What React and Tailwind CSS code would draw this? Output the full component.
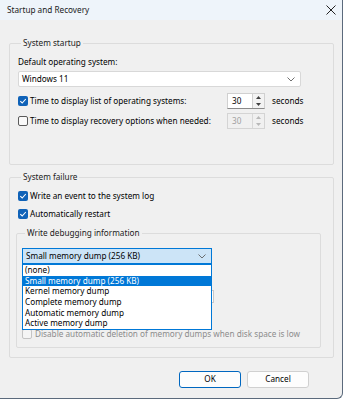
import { useState } from 'react';

const font = { fontFamily: '"Noto Sans", "Open Sans", sans-serif' };

function Check({ checked, disabled }) {
  if (checked) {
    return (
      <span className="w-[10px] h-[10px] rounded-[2px] bg-[#0f62b8] flex items-center justify-center shrink-0">
        <svg width="8" height="8" viewBox="0 0 8 8">
          <path d="M1.3 4.2 L3.2 6 L6.8 2" fill="none" stroke="white" strokeWidth="1.1" />
        </svg>
      </span>
    );
  }
  return (
    <span
      className={`w-[10px] h-[10px] rounded-[2px] border shrink-0 ${
        disabled ? 'border-[#c4c4c4] bg-[#f5f5f5]' : 'border-[#5a5a5a] bg-[#f9f9f9]'
      }`}
    />
  );
}

function Chevron() {
  return (
    <svg width="8" height="5" viewBox="0 0 8 5">
      <path d="M0.5 0.5 L4 4 L7.5 0.5" fill="none" stroke="#606060" strokeWidth="0.9" />
    </svg>
  );
}

function Spin({ value, disabled }) {
  return (
    <div
      className={`flex w-[38px] h-[16px] border ${
        disabled ? 'border-[#d4d4d4] bg-[#f0f0f0] text-[#a0a0a0]' : 'border-[#d0d0d0] border-b-[#8a8a8a] bg-white'
      }`}
    >
      <span className="flex-1 pl-[4px] leading-[14px]">{value}</span>
      <div className={`w-[12px] flex flex-col border-l ${disabled ? 'border-[#d8d8d8]' : 'border-[#d0d0d0] bg-[#f3f3f3]'}`}>
        <div className="flex-1 flex items-center justify-center">
          <svg width="5" height="3" viewBox="0 0 5 3">
            <path d="M0 3 L2.5 0 L5 3 Z" fill={disabled ? '#b8b8b8' : '#404040'} />
          </svg>
        </div>
        <div className="flex-1 flex items-center justify-center">
          <svg width="5" height="3" viewBox="0 0 5 3">
            <path d="M0 0 L2.5 3 L5 0 Z" fill={disabled ? '#b8b8b8' : '#404040'} />
          </svg>
        </div>
      </div>
    </div>
  );
}

const dumps = [
  '(none)',
  'Small memory dump (256 KB)',
  'Kernel memory dump',
  'Complete memory dump',
  'Automatic memory dump',
  'Active memory dump',
];

export default function App() {
  const [selected] = useState(1);

  return (
    <div className="w-[344px] h-[400px] bg-white text-[8.2px] text-black whitespace-nowrap" style={font}>
      <div className="w-[343px] h-[399px] bg-[#f0f0f0] border-r border-b border-[#5b6a7c] rounded-br-[6px] flex flex-col overflow-hidden">
        {/* title bar */}
        <div className="h-[20px] bg-[#eef4fa] flex items-center justify-between pl-[7px] pr-[6px]">
          <span className="text-[#1a1a1a]">Startup and Recovery</span>
          <svg width="10" height="10" viewBox="0 0 10 10">
            <path d="M0.5 0.5 L9.5 9.5 M9.5 0.5 L0.5 9.5" stroke="#222" strokeWidth="1" />
          </svg>
        </div>

        <div className="flex flex-col pl-[9px] pr-[8px] pt-[17px]">
          {/* System startup */}
          <fieldset className="border border-[#dcdcdc] rounded-[2px] pl-[8px] pr-[8px] pb-[35px]">
            <legend className="ml-[3px] px-[2px] leading-[12px] text-[#222]">System startup</legend>
            <div className="pt-[7px] leading-[12px]">Default operating system:</div>
            <div className="mt-[3px] w-[283px] h-[16px] bg-white border border-[#d8d8d8] rounded-[2px] flex items-center justify-between pl-[3px] pr-[5px]">
              <span>Windows 11</span>
              <Chevron />
            </div>
            <div className="mt-[6px] flex items-center h-[16px]">
              <div className="w-[209px] flex items-center gap-[2px]">
                <Check checked />
                <span>Time to display list of operating systems:</span>
              </div>
              <Spin value="30" />
              <span className="ml-[7px]">seconds</span>
            </div>
            <div className="mt-[4px] flex items-center h-[16px]">
              <div className="w-[209px] flex items-center gap-[2px]">
                <Check />
                <span>Time to display recovery options when needed:</span>
              </div>
              <Spin value="30" disabled />
              <span className="ml-[7px]">seconds</span>
            </div>
          </fieldset>

          {/* System failure */}
          <fieldset className="mt-[6px] border border-[#dcdcdc] rounded-[2px] pl-[8px] pr-[12px] pb-[9px]">
            <legend className="ml-[3px] px-[2px] leading-[12px] text-[#222]">System failure</legend>
            <div className="mt-[7px] flex items-center gap-[2px] h-[12px]">
              <Check checked />
              <span>Write an event to the system log</span>
            </div>
            <div className="mt-[6px] flex items-center gap-[2px] h-[12px]">
              <Check checked />
              <span>Automatically restart</span>
            </div>

            <fieldset className="mt-[7px] -ml-[2px] border border-[#dcdcdc] rounded-[2px] pl-[5px] pr-[8px] pb-[7px]">
              <legend className="ml-[3px] px-[2px] leading-[12px] text-[#222]">Write debugging information</legend>
              <div className="relative mt-[9px] w-[190px]">
                <div className="h-[16px] bg-[#cce4f7] border border-[#0078d7] flex items-center justify-between pl-[3px] pr-[5px]">
                  <span>{dumps[selected]}</span>
                  <Chevron />
                </div>
                <div className="absolute left-0 top-[16px] w-[190px] bg-white border border-[#0078d7] z-10">
                  {dumps.map((d, i) => (
                    <div
                      key={d}
                      className={`h-[10.7px] leading-[10.7px] pl-[2px] ${i === selected ? 'bg-[#0078d7] text-white' : ''}`}
                    >
                      {d}
                    </div>
                  ))}
                </div>
              </div>
              {/* dump file box, mostly hidden under the open list */}
              <div className="mt-[26px] w-[192px] h-[13px] bg-white border border-[#c8c8c8]" />
              <div className="mt-[25px] flex items-center gap-[3px] h-[12px] text-[#8c8c8c]">
                <Check disabled />
                <span>Disable automatic deletion of memory dumps when disk space is low</span>
              </div>
            </fieldset>
          </fieldset>

          {/* buttons */}
          <div className="mt-[13px] flex justify-end gap-[6px] pr-[25px]">
            <button className="w-[62px] h-[17px] bg-[#fdfdfd] border border-[#0067c0] rounded-[3px]">OK</button>
            <button className="w-[62px] h-[17px] bg-[#fdfdfd] border border-[#d0d0d0] rounded-[3px]">Cancel</button>
          </div>
        </div>
      </div>
    </div>
  );
}
